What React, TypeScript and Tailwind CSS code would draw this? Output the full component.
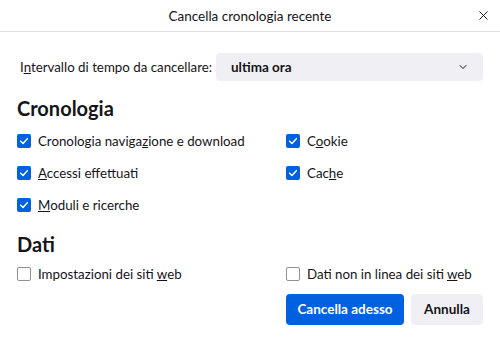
import { ChevronDown, X } from "lucide-react";

function Box({ checked }: { checked: boolean }) {
  if (checked) {
    return (
      <span className="flex h-[14px] w-[14px] shrink-0 items-center justify-center rounded-[2px] bg-[#0061e0]">
        <svg viewBox="0 0 12 12" className="h-[10px] w-[10px]">
          <path d="M2 6.2 L4.8 9 L10 3.2" fill="none" stroke="white" strokeWidth="1.8" strokeLinecap="round" strokeLinejoin="round" />
        </svg>
      </span>
    );
  }
  return <span className="h-[14px] w-[14px] shrink-0 rounded-[2px] border-[1.5px] border-[#8f8f9d] bg-white" />;
}

function Check({ checked, children }: { checked: boolean; children: React.ReactNode }) {
  return (
    <div className="flex h-8 items-center gap-[7px]">
      <Box checked={checked} />
      <span className="whitespace-nowrap text-[13.3px] leading-5 text-[#15141a]">{children}</span>
    </div>
  );
}

export default function App() {
  return (
    <div className="h-[337px] w-[500px] bg-white font-['Lato',sans-serif] text-[#15141a]">
      {/* header */}
      <div className="relative flex h-8 items-center justify-center border-b border-[#e0e0e6]">
        <span className="text-[13.5px] leading-5">Cancella cronologia recente</span>
        <X className="absolute right-[9px] top-[8px] h-[15px] w-[15px] text-[#15141a]" strokeWidth={1.5} />
      </div>

      <div className="px-[17px]">
        <div className="mt-[21px] flex items-center">
          <span className="ml-[3px] w-[196px] whitespace-nowrap text-[13.3px] leading-5">
            I<u>n</u>tervallo di tempo da cancellare:
          </span>
          <div className="flex h-[28px] flex-1 items-center justify-between rounded-[4px] bg-[#f0f0f4] pl-[15px] pr-[14px]">
            <span className="text-[13.5px] font-bold leading-5">ultima ora</span>
            <ChevronDown className="h-3 w-3" strokeWidth={2} />
          </div>
        </div>

        <h2 className="mt-[14px] text-[20px] font-bold leading-[26px]">Cronologia</h2>
        <div className="mt-[4px] grid grid-cols-[269px_1fr]">
          <Check checked>
            Cronologia naviga<u>z</u>ione e download
          </Check>
          <Check checked>
            C<u>o</u>okie
          </Check>
          <Check checked>
            <u>A</u>ccessi effettuati
          </Check>
          <Check checked>
            Cac<u>h</u>e
          </Check>
          <Check checked>
            <u>M</u>oduli e ricerche
          </Check>
        </div>

        <h2 className="mt-[10px] text-[20px] font-bold leading-[26px]">Dati</h2>
        <div className="mt-[1px] grid grid-cols-[269px_1fr]">
          <Check checked={false}>
            Impostazioni dei siti <u>w</u>eb
          </Check>
          <Check checked={false}>
            Dati non in linea dei siti <u>w</u>eb
          </Check>
        </div>

        <div className="mt-[4px] flex justify-end gap-[7px]">
          <button className="h-[31px] w-[118px] rounded-[4px] bg-[#0061e0] text-[13.5px] font-bold text-white">
            Cancella adesso
          </button>
          <button className="h-[31px] w-[72px] rounded-[4px] bg-[#f0f0f4] text-[13.5px] font-bold text-[#15141a]">
            Annulla
          </button>
        </div>
      </div>
    </div>
  );
}
